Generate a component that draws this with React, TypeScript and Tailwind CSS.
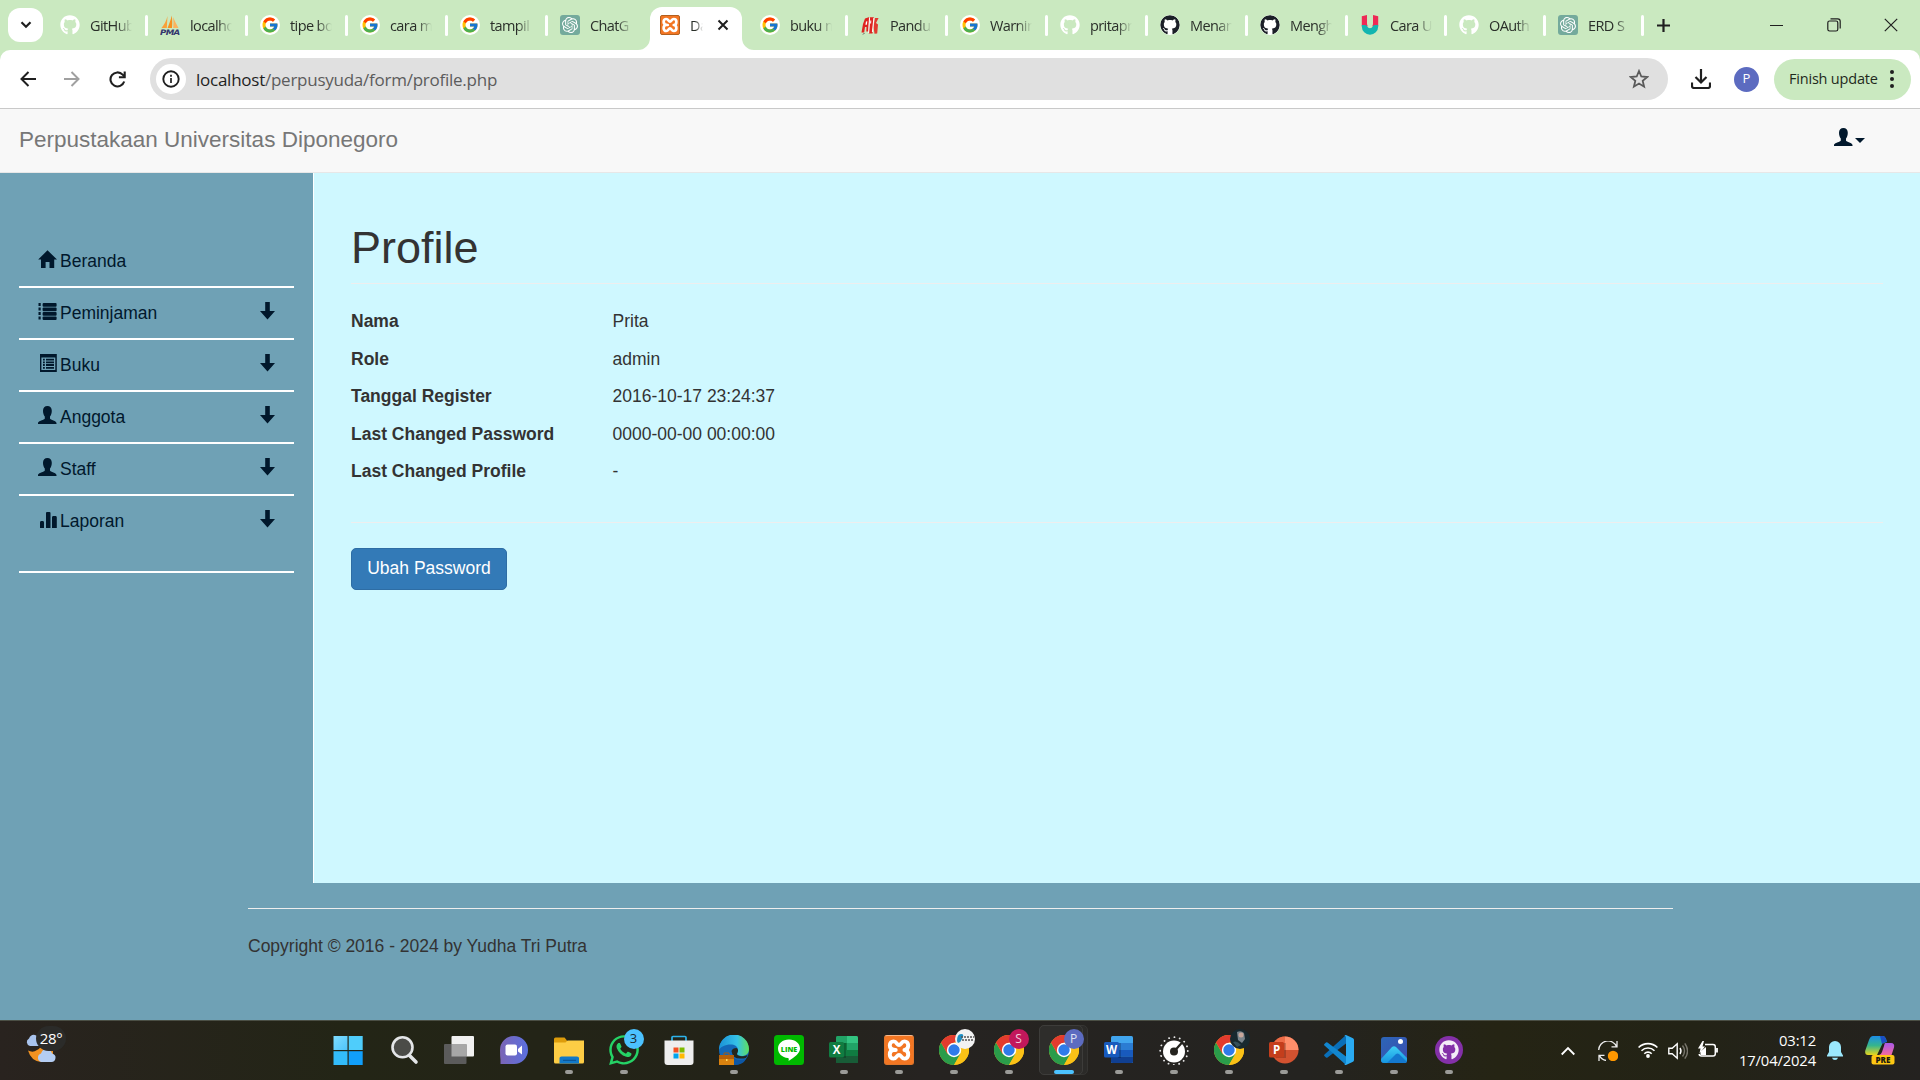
import type { ReactNode } from 'react';
import { FaGithub, FaWhatsapp } from 'react-icons/fa';
import { FcGoogle } from 'react-icons/fc';
import { SiOpenai } from 'react-icons/si';

/* ---------- favicons ---------- */
const GitFav = ({ dark = false }: { dark?: boolean }) => (
  <FaGithub className={dark ? 'size-5 rounded-full bg-white text-[#1b1f27]' : 'size-5 text-white'} />
);
const GoogleFav = () => (
  <span className="flex size-5 items-center justify-center rounded-full bg-white">
    <FcGoogle className="size-[18px]" />
  </span>
);
const GptFav = () => (
  <span className="flex size-5 items-center justify-center rounded-[3px] bg-[#74aa9c] text-white">
    <SiOpenai className="size-4" />
  </span>
);
const XamppFav = ({ big = false }: { big?: boolean }) => (
  <span
    className={
      big
        ? 'flex size-[30px] items-center justify-center rounded-[3px] border border-[#e0762b] border-t-[#f6b98c] bg-[#f37623] text-white'
        : 'flex size-5 items-center justify-center rounded-[2px] border border-[#b2601f] bg-[#f37623] text-white'
    }
  >
    <svg viewBox="0 0 24 24" className={big ? 'size-[26px]' : 'size-[18px]'} fill="none" stroke="currentColor" strokeWidth="3.6" strokeLinejoin="round" strokeLinecap="round">
      <path d="M9 12C4 12 3.500 9.500 3.500 7.700 3.500 5.500 5 4 7 4c3 0 3 3.500 5 3.500S14 4 17 4c2 0 3.500 1.500 3.500 3.700 0 1.800-.5 4.300-3.500 4.300 3 0 3.500 2.500 3.500 4.300 0 2.200-1.500 3.700-3.500 3.700-3 0-3-3.500-5-3.500S10 20 7 20c-2 0-3.500-1.500-3.500-3.700C3.500 14.500 4 12 7 12" />
    </svg>
  </span>
);
const PmaFav = () => (
  <svg viewBox="0 0 20 20" className="size-5">
    <path d="M7.500 1 6.800 13H1.500C4 10 6.400 6 7.500 1Z" fill="#f9a13a" />
    <path d="M11.800 0.5c-.9 4-2.5 8-4.2 12.5H12c.4-4 .4-8-.2-12.5Z" fill="#f7901e" />
    <path d="M13 2c1.500 3.800 3.500 7.500 5.500 11H13.200c.4-4 .3-7.500-.2-11Z" fill="#fbb35d" />
    <text x="0" y="19.500" fontSize="7.600" fontWeight="900" fontStyle="italic" fill="#33356d" fontFamily="DejaVu Sans" textLength="19.500" lengthAdjust="spacingAndGlyphs">PMA</text>
  </svg>
);
const PandFav = () => (
  <svg viewBox="0 0 20 20" className="size-5">
    <path d="M5 3.500 9.500 2 8.800 9 8.500 16.500H6.300L6.500 12H5l-.8 5.500H1.500L3 9Z" fill="#df2420" />
    <path d="M10 2.200h3.800L12.500 18.500H8.800L9.700 9Z" fill="#df2420" />
    <path d="M14.800 3h3.800l-2.600 5 2 1.500-.8 9-2.700.2-1-6.500Z" fill="#e23a30" />
    <path d="M9.500 2.500 8.700 18M13.900 3l-1.500 14" stroke="#fff" strokeWidth="1" />
    <path d="M6 6.500l1.300-.3-.4 3.600H5.400ZM10.300 5.500h1l-.2 3h-1Z" fill="#fff" />
    <path d="M3 19.500l1.500-1.500" stroke="#555" strokeWidth="1" />
  </svg>
);
const UFav = () => (
  <svg viewBox="0 0 20 20" className="size-5">
    <path d="M1.800 1.200 7 0v8.500q0 2 1 2.800H1.800ZM18.200 1.200 13 0v8.500q0 2-1 2.800h6.200Z" fill="#ee2a55" />
    <path d="M1.800 10h3.500q1.500 0 2 1.500Q8 13.300 10 13.300t2.700-1.800q.5-1.500 2-1.500h3.500v1.500a8.200 8.200 0 0 1-16.400 0Z" fill="#12b5b0" />
  </svg>
);

type Tab = { icon: ReactNode; title: string; w: string; active?: boolean; noSep?: boolean };
const tabs: Tab[] = [
  { icon: <GitFav />, title: 'GitHub', w: 'w-[100px]' },
  { icon: <PmaFav />, title: 'localho', w: 'w-[100px]' },
  { icon: <GoogleFav />, title: 'tipe bo', w: 'w-[100px]' },
  { icon: <GoogleFav />, title: 'cara m', w: 'w-[100px]' },
  { icon: <GoogleFav />, title: 'tampil', w: 'w-[100px]' },
  { icon: <GptFav />, title: 'ChatG', w: 'w-[100px]', noSep: true },
  { icon: <XamppFav />, title: 'Da', w: 'w-[100px]', active: true },
  { icon: <GoogleFav />, title: 'buku m', w: 'w-[100px]' },
  { icon: <PandFav />, title: 'Pandu', w: 'w-[100px]' },
  { icon: <GoogleFav />, title: 'Warnin', w: 'w-[100px]' },
  { icon: <GitFav />, title: 'pritapr', w: 'w-[100px]' },
  { icon: <GitFav dark />, title: 'Menan', w: 'w-[100px]' },
  { icon: <GitFav dark />, title: 'Mengh', w: 'w-[100px]' },
  { icon: <UFav />, title: 'Cara U', w: 'w-[99px]' },
  { icon: <GitFav />, title: 'OAuth', w: 'w-[99px]' },
  { icon: <GptFav />, title: 'ERD S', w: 'w-[98px]' },
];

function TabItem({ t }: { t: Tab }) {
  if (t.active) {
    return (
      <div className="relative flex h-[50px] w-[100px] shrink-0 items-end">
        <div className="flex h-[43px] w-[92px] items-center rounded-t-[12px] bg-white pb-[7px] pl-[10px]">
          {t.icon}
          <span className="ml-[10px] w-[13px] overflow-hidden whitespace-nowrap pt-[2px] [mask-image:linear-gradient(to_right,black_40%,transparent)]">{t.title}</span>
          <svg viewBox="0 0 12 12" className="ml-[14px] size-3" stroke="#1f1f1f" strokeWidth="2"><path d="M1.500 1.500l9 9M10.500 1.500l-9 9" /></svg>
        </div>
        <svg viewBox="0 0 12 12" className="absolute bottom-0 -left-3 size-3"><path d="M12 0v12H0A12 12 0 0 0 12 0" fill="#fff" /></svg>
        <svg viewBox="0 0 12 12" className="absolute bottom-0 left-[92px] size-3"><path d="M0 0v12h12A12 12 0 0 1 0 0" fill="#fff" /></svg>
      </div>
    );
  }
  return (
    <div className={`${t.w} flex h-[50px] shrink-0 items-center pl-[10px]`}>
      {t.icon}
      <span className="ml-[10px] w-[42px] overflow-hidden whitespace-nowrap pt-[2px] [mask-image:linear-gradient(to_right,black_65%,transparent)]">{t.title}</span>
      {!t.noSep && <i className="ml-auto mr-[2px] h-[21px] w-[3px] rounded-full bg-white" />}
    </div>
  );
}

/* ---------- page glyphs ---------- */
const G = ({ children }: { children: ReactNode }) => (
  <svg viewBox="0 0 19 19" className="size-[19px] shrink-0" fill="#01182c">{children}</svg>
);
const UserGlyph = () => (
  <G><path d="M9.400 0C6.700 0 5 1.900 5 4.700c0 2.500.7 4.600 1.800 5.700v1.800c0 .7-.4 1-1.200 1.400C3.300 14.700 0 15.400 0 17.300V18h18.500v-.7c0-1.900-3-2.600-5.300-3.700-.8-.4-1.200-.7-1.200-1.400v-1.800c1.100-1.100 1.800-3.200 1.800-5.700C13.800 1.900 12.100 0 9.400 0Z" /></G>
);
const HomeGlyph = () => (
  <G><path d="M9.500.2 19 9.600h-2.800V18h-4.700v-6H7.600v6H3V9.600H.2Z" /></G>
);
const ListGlyph = () => (
  <G>
    <path d="M.5 1h2.200v3H.5zM.5 5.500h2.200v3H.5zM.5 10h2.200v3H.5zM.5 14.500h2.200v3H.5z" />
    <rect x="4.600" y="1" width="14" height="3.700" rx="1" /><rect x="4.600" y="5.500" width="14" height="3.700" rx="1" />
    <rect x="4.600" y="10" width="14" height="3.700" rx="1" /><rect x="4.600" y="14.500" width="14" height="3.500" rx="1" />
  </G>
);
const ListAltGlyph = () => (
  <G>
    <path fillRule="evenodd" d="M2 0h16.800v18H2ZM3.400 3.400v12.700h13.900V3.400Z" />
    <path d="M5 4.700h1.800v1.800H5zM8 4.700h8v1.800H8zM5 7.400h1.800v1.800H5zM8 7.400h8v1.800H8zM5 10.100h1.800v1.800H5zM8 10.100h8v1.800H8zM5 12.900h1.800v1.800H5zM8 12.900h8v1.800H8z" />
  </G>
);
const StatsGlyph = () => (
  <G><path d="M2 18v-5.500Q2 11 3 11h2q1 0 1 1.500V18ZM8 18V3q0-1 1-1h2.500q1 0 1 1v15ZM14 18V7.500q0-1.500 1-1.500h2.800q1 0 1 1.500V18Z" /></G>
);
const DownGlyph = () => (
  <svg viewBox="0 0 15 18" className="h-[18px] w-[15px]" fill="#01182c"><path d="M5.200 0h4.600v9H15L7.500 17.500 0 9h5.200Z" /></svg>
);

const menu = [
  { label: 'Beranda', icon: <HomeGlyph />, down: false },
  { label: 'Peminjaman', icon: <ListGlyph />, down: true },
  { label: 'Buku', icon: <ListAltGlyph />, down: true },
  { label: 'Anggota', icon: <UserGlyph />, down: true },
  { label: 'Staff', icon: <UserGlyph />, down: true },
  { label: 'Laporan', icon: <StatsGlyph />, down: true },
];
const details = [
  ['Nama', 'Prita'],
  ['Role', 'admin'],
  ['Tanggal Register', '2016-10-17 23:24:37'],
  ['Last Changed Password', '0000-00-00 00:00:00'],
  ['Last Changed Profile', '-'],
];

/* ---------- taskbar icons ---------- */
const Chrome = () => (
  <svg viewBox="0 0 30 30" className="size-[30px]">
    <circle cx="15" cy="15" r="15" fill="#fbc116" />
    <path d="M15 15 2 7.500A15 15 0 0 1 28 7.500H15Z" fill="#e33b2e" />
    <path d="M2 7.500A15 15 0 0 0 15 30l6.500-11.200L15 15l-6.500 3.700Z" fill="#2a9c4a" />
    <path d="M15 7.500h13A15 15 0 0 1 15 30l6.500-11.200Z" fill="#fbc116" />
    <path d="M2 7.500 8.500 18.700 15 7.500Z" fill="#e33b2e" />
    <circle cx="15" cy="15" r="7.200" fill="#fff" />
    <circle cx="15" cy="15" r="5.700" fill="#2f7be9" />
  </svg>
);
const Office = ({ letter, tile, rows }: { letter: string; tile: string; rows: string[] }) => (
  <svg viewBox="0 0 30 30" className="size-[30px]">
    {letter === 'P' ? (
      <>
        <circle cx="16" cy="15" r="13.500" fill={rows[2]} />
        <path d="M16 1.500A13.500 13.500 0 0 0 2.500 15H16Z" fill={rows[0]} />
        <path d="M16 1.500A13.500 13.500 0 0 1 29.500 15H16Z" fill={rows[1]} />
      </>
    ) : letter === 'X' ? (
      <>
        <rect x="7" y="1" width="22" height="27" rx="1.500" fill={rows[2]} />
        <path d="M7 2.500Q7 1 8.500 1H18v7H7Z" fill={rows[1]} />
        <path d="M18 1h9.500Q29 1 29 2.500V8H18Z" fill={rows[0]} />
        <path d="M18 8h11v7H18Z" fill={rows[1]} />
        <path d="M7 21h22v5.500q0 1.500-1.500 1.500h-19Q7 28 7 26.500Z" fill={rows[3]} />
      </>
    ) : (
      <>
        <rect x="7" y="1" width="22" height="27" rx="1.500" fill={rows[0]} />
        <path d="M7 8h22v7H7Z" fill={rows[1]} />
        <path d="M7 15h22v6.500H7Z" fill={rows[2]} />
        <path d="M7 21.500h22v5q0 1.500-1.500 1.500h-19Q7 28 7 26.500Z" fill={rows[3]} />
      </>
    )}
    <rect x="7" y="8" width="10" height="15" fill="#000" opacity=".2" />
    <rect x="0" y="7" width="15" height="15.500" rx="1.500" fill={tile} />
    <text x="7.500" y="19" textAnchor="middle" fontFamily="Open Sans" fontWeight="700" fontSize="11.500" fill="#fff">{letter}</text>
  </svg>
);
const Badge = ({ c, children }: { c: string; children?: ReactNode }) => (
  <span className={`absolute -top-[6px] left-[15px] flex size-5 items-center justify-center rounded-full text-[12px] ${c}`}>{children}</span>
);

const apps: { icon: ReactNode; run?: 'on' | 'active' }[] = [
  {
    icon: (
      <svg viewBox="0 0 30 30" className="mr-[2px] size-[30px] shrink-0">
        <defs><linearGradient id="win" x1="0" y1="0" x2="1" y2="1"><stop stopColor="#7edcff" /><stop offset="1" stopColor="#4fc4fa" /></linearGradient></defs>
        <path d="M.5 1h14v14H.5z" fill="url(#win)" /><path d="M15.700 1h14v14h-14z" fill="#4fcdfb" />
        <path d="M.5 16.200h14v13.800H.5z" fill="#33bcfb" /><path d="M15.700 16.200h14v13.800h-14z" fill="#119ffb" />
      </svg>
    ),
  },
  {
    icon: (
      <svg viewBox="0 0 30 30" className="size-[30px]" fill="none" stroke="#e4e6e8" strokeLinecap="round">
        <circle cx="13.500" cy="12.300" r="10" fill="#4b4c48" strokeWidth="2.600" /><path d="M20.500 20.500 27 27" strokeWidth="3.600" />
      </svg>
    ),
  },
  {
    icon: (
      <svg viewBox="0 0 30 30" className="size-[30px]">
        <rect x="7.500" y="1" width="22.500" height="20.500" rx="1" fill="#f1f1f1" /><rect x="0" y="9" width="22.500" height="20" rx="1" fill="#5b5b5b" />
        <rect x="7.500" y="9" width="15" height="12.500" fill="#a7a7a7" />
      </svg>
    ),
  },
  {
    icon: (
      <svg viewBox="0 0 30 30" className="size-[30px]">
        <defs><linearGradient id="chat" x1="0" x2="1"><stop stopColor="#7b65b5" /><stop offset="1" stopColor="#5b70e0" /></linearGradient></defs>
        <path d="M15 1a14 14 0 1 1 0 28H1.500V25Q1 21 1 15A14 14 0 0 1 15 1Z" fill="url(#chat)" />
        <rect x="6.500" y="9.500" width="11.500" height="11" rx="2" fill="#fff" /><path d="m19 14 4-3.500v9L19 16.500Z" fill="#fff" />
      </svg>
    ),
  },
  {
    run: 'on',
    icon: (
      <svg viewBox="0 0 30 30" className="size-[30px]">
        <path d="M0 4q0-1.500 1.500-1.500h9L13 5.500v3H0Z" fill="#dd9c0b" />
        <path d="M0 7.500h11.500l2-2H30v21.500q0 1.500-1.500 1.500h-27Q0 28.500 0 27Z" fill="#fdcd45" />
        <path d="M5.500 28.500V23q0-1.500 2-1.500h15.500q2 0 2 1.500v5.500Z" fill="#1279c8" /><path d="M9 25.300h13" stroke="#0a4f8f" />
      </svg>
    ),
  },
  { run: 'on', icon: <><FaWhatsapp className="size-[34px] shrink-0 text-[#25d366]" /><Badge c="bg-[#4cc2ff] text-[#1b2b35] text-[13px]">3</Badge></> },
  {
    icon: (
      <svg viewBox="0 0 30 30" className="size-[30px]">
        <path d="M8 7V2.500Q8 1.500 9 1.500h12q1 0 1 1V7" fill="none" stroke="#2db3ea" strokeWidth="1.700" />
        <path d="M.5 5.500h29V27q0 3-3 3h-23q-3 0-3-3Z" fill="#eeeeee" />
        <path d="M9.500 12.500h5v5h-5z" fill="#f25022" /><path d="M15.500 12.500h5v5h-5z" fill="#7fba00" /><path d="M9.500 18.500h5v5h-5z" fill="#00a4ef" /><path d="M15.500 18.500h5v5h-5z" fill="#ffb900" />
      </svg>
    ),
  },
  {
    run: 'on',
    icon: (
      <svg viewBox="0 0 30 30" className="size-[30px]">
        <defs><linearGradient id="edge" x1="0" x2="1"><stop stopColor="#1b92d6" /><stop offset=".6" stopColor="#35c1e8" /><stop offset="1" stopColor="#5fe05c" /></linearGradient></defs>
        <circle cx="15" cy="15" r="15" fill="#1368b8" />
        <path d="M0 15A15 15 0 0 1 30 14c0 5-4 7-7 7-4 0-6-1.500-4.500-3.500C20 14 18 10 13 9.500 7 9 1 12 0 15Z" fill="url(#edge)" />
        <path d="M12.500 16q1-3 5-3 2.500 1.500 1 4.500-1.500 3 2.500 3.500 4 .8 7.500-1-1 4-5 3.500-10 1-11-7.500Z" fill="#24261d" />
        <path d="M13 21q4 6 14 3-3 6-12 6Z" fill="#0d57a5" />
        <rect x="0" y="20" width="15" height="10" fill="#d9820f" /><path d="M0 20h15v4H0Z" fill="#b5600a" /><path d="M5 20v-2h5v2" stroke="#a85a10" fill="none" /><path d="M7 24h1.500v2H7z" fill="#ffd75e" />
      </svg>
    ),
  },
  {
    icon: (
      <svg viewBox="0 0 30 30" className="size-[30px]">
        <rect width="30" height="30" rx="3.500" fill="#00b900" />
        <path d="M15 4.500c6.500 0 11 4 11 9 0 4-3.500 7-7 9.500L14.500 26c.5-1.500.3-3-.5-3C8 22.500 4 18.500 4 13.500c0-5 4.500-9 11-9Z" fill="#fff" />
        <text x="15" y="16.500" textAnchor="middle" fontFamily="Open Sans" fontWeight="800" fontSize="6.800" fill="#00b900" textLength="16.500" lengthAdjust="spacingAndGlyphs">LINE</text>
      </svg>
    ),
  },
  { run: 'on', icon: <Office letter="X" tile="#107c41" rows={['#33c481', '#21a366', '#107c41', '#185c37']} /> },
  { run: 'on', icon: <XamppFav big /> },
  {
    run: 'on',
    icon: (
      <>
        <Chrome />
        <svg viewBox="0 0 20 20" className="absolute -top-[6px] left-[16px] size-5">
          <circle cx="10" cy="10" r="10" fill="#f2f2f2" /><path d="M2 12Q2 5 6 5t1 5q-1 3-4 4" fill="#1e8fc4" /><path d="M6 8h13M7 11h12" stroke="#555" strokeWidth="1.300" strokeDasharray="2 1" />
        </svg>
      </>
    ),
  },
  { run: 'on', icon: <><Chrome /><Badge c="bg-[#c2185b] text-[#f3cfdc]">S</Badge></> },
  { run: 'active', icon: <><Chrome /><Badge c="bg-[#5c6bc0] text-[#dfe2f3]">P</Badge></> },
  { run: 'on', icon: <Office letter="W" tile="#185abd" rows={['#41a5ee', '#2b7cd3', '#185abd', '#103f91']} /> },
  {
    run: 'on',
    icon: (
      <svg viewBox="0 0 30 30" className="size-[30px]">
        <circle cx="15" cy="16" r="13.800" fill="none" stroke="#e8e8e8" strokeWidth="1.800" strokeLinecap="round" strokeDasharray=".1 5.320" />
        <circle cx="15" cy="16.500" r="11" fill="#fff" /><circle cx="15" cy="16.500" r="4" fill="#24231f" /><path d="m15 16.500 8.500-9.500" stroke="#24231f" strokeWidth="2.200" />
      </svg>
    ),
  },
  {
    run: 'on',
    icon: (
      <>
        <Chrome />
        <svg viewBox="0 0 20 20" className="absolute -top-[6px] left-[16px] size-5">
          <circle cx="10" cy="10" r="10" fill="#18292f" /><path d="M7 3q4-2 7 1l1 6-3 4-4-3Z" fill="#78858d" /><circle cx="11" cy="6" r="2.500" fill="#c7a79c" /><path d="M3 13q4-2 8 3l-4 2Z" fill="#34505a" />
        </svg>
      </>
    ),
  },
  { run: 'on', icon: <Office letter="P" tile="#c43e1c" rows={['#ed6c47', '#ff8f6b', '#d35230']} /> },
  {
    run: 'on',
    icon: (
      <svg viewBox="0 0 30 30" className="size-[30px]">
        <path d="M22 0v8.500L3.500 22.500Q2.800 23 2 22.400L.4 21Q-.3 20.200.5 19.500Z" fill="#0a6fb8" />
        <path d="M22 30v-8.500L3.500 7.500Q2.800 7 2 7.600L.4 9q-.7.800.1 1.500Z" fill="#1286cf" />
        <path d="M22 0 29 3.200Q30 3.700 30 5v20q0 1.300-1 1.800L22 30q-1 .2-1.800-.8Q22 29.500 22 27.500v-25Q22 .5 20.200.8 21 0 22 0Z" fill="#2aabf2" />
      </svg>
    ),
  },
  {
    run: 'on',
    icon: (
      <svg viewBox="0 0 30 30" className="size-[30px]">
        <defs><linearGradient id="pho" x1="0" y1="0" x2="1" y2="1"><stop stopColor="#2c66b8" /><stop offset="1" stopColor="#3b4db0" /></linearGradient><linearGradient id="mt" x1="0" y1="0" x2="0" y2="1"><stop stopColor="#3fd0f5" /><stop offset="1" stopColor="#1695e0" /></linearGradient></defs>
        <rect x="2" y="2" width="26" height="26" rx="3" fill="url(#pho)" /><path d="M2 24 13 12q2-1.500 4 0l11 11v2q0 3-3 3H5q-3 0-3-3Z" fill="url(#mt)" /><path d="M8 28l9-9q1.500-1.200 3 0l8 8q-1 1-3 1Z" fill="#1479cf" />
        <circle cx="21.500" cy="6.500" r="2.500" fill="#fff" />
      </svg>
    ),
  },
  {
    run: 'on',
    icon: (
      <span className="flex size-7 items-center justify-center rounded-full bg-[#8430a8]"><FaGithub className="size-5 text-[#f4ecf7]" /></span>
    ),
  },
];

export default function App() {
  return (
    <div className="flex h-[1080px] w-[1920px] flex-col overflow-hidden bg-[#cae9c0] font-['Liberation_Sans',Arial,sans-serif] text-[17.5px] text-[#333]">
      {/* tab strip */}
      <header className="flex h-[50px] shrink-0 items-center pl-2 font-['Open_Sans',sans-serif] text-[14.500px] tracking-[-0.6px] text-[#2a2f29]">
        <div className="mr-[7px] flex h-[34px] w-[35px] items-center justify-center rounded-[12px] bg-white">
          <svg viewBox="0 0 12 8" className="h-2 w-3" fill="none" stroke="#1f1f1f" strokeWidth="2.200"><path d="m1.500 1.200 4.500 4.500 4.500-4.500" /></svg>
        </div>
        {tabs.map((t, i) => <TabItem key={i} t={t} />)}
        <svg viewBox="0 0 13 13" className="ml-[11px] size-[13px]" stroke="#1f1f1f" strokeWidth="2.200"><path d="M6.500 0v13M0 6.500h13" /></svg>
        <div className="ml-auto mr-px flex h-[50px]">
          <span className="flex w-[57px] items-center justify-center"><i className="h-px w-[13px] bg-[#1f1f1f]" /></span>
          <span className="flex w-[57px] items-center justify-center">
            <svg viewBox="0 0 14 14" className="size-[14px]" fill="none" stroke="#1f1f1f" strokeWidth="1.200"><rect x=".8" y="3" width="10" height="10" rx="1.800" /><path d="M3.500.8H10.700q2.500 0 2.500 2.500v7.200" /></svg>
          </span>
          <span className="flex w-[57px] items-center justify-center">
            <svg viewBox="0 0 14 14" className="size-[14px]" stroke="#1f1f1f" strokeWidth="1.200"><path d="m.8.8 12.400 12.400M13.200.8.8 13.200" /></svg>
          </span>
        </div>
      </header>

      {/* toolbar */}
      <div className="flex h-[59px] shrink-0 items-center rounded-t-[10px] border-b border-[#c9c9c9] bg-white font-['Open_Sans',sans-serif]">
        <svg viewBox="0 0 16 16" className="ml-5 size-4" fill="none" stroke="#1f1f1f" strokeWidth="2"><path d="M16 8H1.500M8.500 1 1.500 8l7 7" /></svg>
        <svg viewBox="0 0 16 16" className="ml-[28px] size-4" fill="none" stroke="#a0a0a0" strokeWidth="2"><path d="M0 8h14.500M7.500 1l7 7-7 7" /></svg>
        <svg viewBox="0 0 17 17" className="ml-[29px] size-[17px]" fill="none" stroke="#1f1f1f" strokeWidth="2.100"><path d="M15.200 10.500A7 7 0 1 1 13.600 3.600L15.500 5.500" /><path d="M15.700.5v5.800H9.900" /></svg>
        <div className="ml-6 flex h-[42px] w-[1518px] items-center rounded-full bg-[#e0e0e0] pl-[6px]">
          <span className="flex size-[30px] items-center justify-center rounded-full bg-white">
            <svg viewBox="0 0 18 18" className="size-[18px]" fill="none" stroke="#1f1f1f" strokeWidth="1.900"><circle cx="9" cy="9" r="7.700" /><path d="M9 8v5M9 4.700v2" strokeWidth="1.700" /></svg>
          </span>
          <span className="ml-[10px] whitespace-nowrap pt-px text-[17px] tracking-[-0.25px] text-[#5c5c5c]"><span className="text-[#1f1f1f]">localhost</span>/perpusyuda/form/profile.php</span>
          <svg viewBox="0 0 20 20" className="ml-auto mr-[19px] size-5" fill="none" stroke="#5a5a5a" strokeWidth="1.800"><path d="m10 2 2.300 5.500 6 .5-4.600 3.900 1.400 5.800-5.100-3.100-5.100 3.100 1.400-5.800L1.700 8l6-.5Z" /></svg>
        </div>
        <svg viewBox="0 0 20 20" className="ml-[23px] size-5" fill="none" stroke="#1f1f1f" strokeWidth="2.200"><path d="M10 0v13M4.500 8l5.500 5.500L15.500 8M1 13.500V17q0 2 2 2h14q2 0 2-2v-3.500" /></svg>
        <span className="ml-[23px] flex size-[25px] items-center justify-center rounded-full bg-[#5c6bc0] text-[13px] text-white">P</span>
        <div className="ml-[15px] flex h-[41px] w-[137px] items-center rounded-full bg-[#cae9c0] pl-[15px] text-[14.500px] tracking-[-0.2px] text-[#1f2a1c]">
          <span className="w-[89px] whitespace-nowrap">Finish update</span>
          <svg viewBox="0 0 4 18" className="ml-3 h-[18px] w-1" fill="#1f1f1f"><circle cx="2" cy="2" r="2" /><circle cx="2" cy="9" r="2" /><circle cx="2" cy="16" r="2" /></svg>
        </div>
      </div>

      {/* site navbar */}
      <nav className="flex h-16 shrink-0 items-start border-b border-[#e7e7e7] bg-[#f8f8f8] pl-[19px] pr-[55px] pt-[19px]">
        <span className="-mt-px whitespace-nowrap text-[22.500px] leading-[25px] text-[#777]">Perpustakaan Universitas Diponegoro</span>
        <span className="ml-auto flex items-start gap-[2px]">
          <UserGlyph />
          <svg viewBox="0 0 10 5" className="mt-[10px] h-[5px] w-[10px]" fill="#01182c"><path d="M0 0h10L5 5Z" /></svg>
        </span>
      </nav>

      {/* body */}
      <div className="flex h-[710px] shrink-0 bg-[#6fa1b5]">
        <aside className="w-[313px] shrink-0 pl-[19px] pr-[19px] pt-[63px] text-[#01182c]">
          <ul className="h-[337px] border-b-2 border-white">
            {menu.map((m) => (
              <li key={m.label} className="flex h-[52px] items-start border-b-2 border-white pl-[18.500px] pr-[19px] pt-[14px] last:border-b-0">
                <span className="flex w-[22.500px]">{m.icon}</span>
                <span className="flex-1 pt-[1px] leading-[20px]">{m.label}</span>
                {m.down && <DownGlyph />}
              </li>
            ))}
          </ul>
        </aside>
        <main className="flex-1 border-l border-white bg-[#cff8ff] pl-[37px] pr-[37px] pt-[50px]">
          <h1 className="h-[61px] border-b border-[#eee] text-[45px] leading-[50px]">Profile</h1>
          <dl className="pt-[23px]">
            {details.map(([k, v]) => (
              <div key={k} className="flex h-[37.5px] leading-[25px]">
                <dt className="w-[261.500px] pt-[2px] font-bold">{k}</dt>
                <dd className="pt-[2px]">{v}</dd>
              </div>
            ))}
          </dl>
          <hr className="mt-[27px] border-[#eee]" />
          <button className="mt-[25px] flex h-[42px] w-[156px] items-center justify-center rounded-[5px] border border-[#2e6da4] bg-[#337ab7] text-white">Ubah Password</button>
        </main>
      </div>
      <footer className="h-[137px] shrink-0 bg-[#6fa1b5] pl-[248px] pr-[247px] pt-[25px]">
        <p className="border-t border-[#eee] pt-[25px] leading-[25px] tracking-[-0.01px]">Copyright © 2016 - 2024 by Yudha Tri Putra</p>
      </footer>

      {/* taskbar */}
      <div className="flex h-[60px] shrink-0 border-t border-[#4b4f45] bg-[linear-gradient(90deg,#29231f_0%,#232516_18%,#232318_38%,#262321_48%,#242320_68%,#252414_78%,#232316_88%,#242220_100%)] font-['Open_Sans',sans-serif] text-white">
        <div className="flex w-[321px] pl-[26px] pt-[8px]">
          <svg viewBox="0 0 32 34" className="h-[34px] w-8">
            <path d="M4 17a4 4 0 0 1-1-7.500Q5 5 9 6q5 1 5 11Z" fill="#a9c4ee" />
            <path d="M2 21.500q5 2.500 9-.5 4-2 5-6h11v10q-4 7-12 8Q5 32 2 21.500Z" fill="#f29220" />
            <path d="M15 33a4.500 4.500 0 0 1 0-8.500q2-5 6-5 4 1 5 5 4 1 3.500 4.500Q29 33 25.500 33Z" fill="#b4cdf2" />
          </svg>
          <span className="-ml-[22px] -mt-[3px] flex h-[25px] w-[30px] items-center justify-center rounded-full bg-[#2b2b29] text-[15px] tracking-[-0.4px]">28°</span>
        </div>
        {apps.map((a, i) => (
          <div key={i} className="relative flex w-[55px] shrink-0 flex-col items-center pt-[14px]">
            {a.run === 'active' && (
              <>
                <i className="absolute left-[3px] top-[4px] h-[50px] w-[49px] rounded-[5px] border border-[#353432] bg-[#2b2a28]" />
                <i className="absolute left-[3px] top-[4px] h-[50px] w-[44px] rounded-[5px] border border-[#3d3c3a] bg-[#2e2d2b]" />
              </>
            )}
            <div className="relative flex h-[30px] w-[30px] items-center justify-center">{a.icon}</div>
            {a.run === 'on' && <i className="mt-[5px] h-[4px] w-2 rounded-full bg-[#9b9b98]" />}
            {a.run === 'active' && <i className="relative mt-[5px] h-[4px] w-5 rounded-full bg-[#4cc2ff]" />}
          </div>
        ))}
        <div className="ml-auto flex h-[59px] items-center pr-[25px]">
          <svg viewBox="0 0 14 9" className="size-[14px]" fill="none" stroke="#fff" strokeWidth="1.800"><path d="m.7 8 6.300-6.500L13.300 8" /></svg>
          <svg viewBox="0 0 20 20" className="ml-[23px] size-5" fill="none" stroke="#eee" strokeWidth="1.300"><path d="M.7 9A9.300 9.300 0 0 1 18.500 5.500M19 0v5.800h-5.500M8 19.500A9 9 0 0 1 1.500 14.500M1 20v-5.700h5.500" /><circle cx="15" cy="15" r="5.200" fill="#ff9800" stroke="none" /></svg>
          <svg viewBox="0 0 20 16" className="ml-5 -mt-[2px] h-4 w-5" fill="none" stroke="#fff" strokeWidth="1.600"><path d="M.6 5.500a13.300 13.300 0 0 1 18.800 0M3.500 8.700a9.200 9.200 0 0 1 13 0M6.300 11.700a5.200 5.200 0 0 1 7.400 0" /><circle cx="10" cy="14" r="1.900" fill="#fff" stroke="none" /></svg>
          <svg viewBox="0 0 20 18" className="ml-[10px] h-[18px] w-5" fill="none" stroke="#fff" strokeWidth="1.400"><path d="M.8 6.200v5.600h3.400l5 4.400V1.800l-5 4.400Z" /><path d="M12 6q2 3 0 6" /><path d="M14.500 3.500q4 5.500 0 11M16.800 1.300q5.500 7.700 0 15.400" stroke="#77756b" /></svg>
          <svg viewBox="0 0 20 16" className="ml-[10px] -mt-px h-4 w-5 overflow-visible" fill="none" stroke="#fff" strokeWidth="1.500"><path d="M7 2.500h8q2.300 0 2.300 2.300v6.900q0 2.300-2.300 2.300H3.500Q1.200 14 1.200 12" /><path d="M4.500-1 0 6.500h2.500L1.500 11.500 7 4.500H4.500L6-1Z" fill="#fff" stroke="none" /><path d="M2.500 13V9.500L8 5v8Z" fill="#fff" stroke="none" /><path d="M19 6v4.500" strokeWidth="1.800" /></svg>
          <div className="-mt-[2px] ml-[17px] w-[81px] whitespace-nowrap text-right text-[14.800px] leading-[20px] tracking-[-0.15px]"><div>03:12</div><div>17/04/2024</div></div>
          <svg viewBox="0 0 16 19" className="ml-[11px] h-[19px] w-4" fill="#9be8fd"><path d="M8 0a6 6 0 0 1 6 6v5l2 3.500V15.500H0V14.500L2 11V6A6 6 0 0 1 8 0ZM5 16.700h6q-.6 2.300-3 2.300t-3-2.300Z" /></svg>
          <svg viewBox="0 0 30 29" className="ml-[22px] h-[29px] w-[30px]">
            <defs><linearGradient id="cp1" x1="0" y1="0" x2="0" y2="1"><stop stopColor="#1c8ee8" /><stop offset=".5" stopColor="#35b58d" /><stop offset="1" stopColor="#e8d51c" /></linearGradient><linearGradient id="cp2" x1="0" y1="0" x2="0" y2="1"><stop stopColor="#a958e8" /><stop offset="1" stopColor="#f26aa0" /></linearGradient></defs>
            <path d="M8 0h10q2 0 3 3l1 3q-3 0-4.500 3L13 19H3Q-.5 19 .3 14.500L4 4Q5.500 0 8 0Z" fill="url(#cp1)" /><path d="M15 0h3q2 0 3 3l1 3q-3 0-5 2Z" fill="#1a4fc4" />
            <path d="M17.500 7.500h1.500l-4 11.500h-3Z" fill="#24241c" />
            <path d="M20 7h6q4 0 3 4.500L26.500 19H14q2 0 3-3l2-6q.6-3 1-3Z" fill="url(#cp2)" />
            <rect x="6.500" y="19" width="23" height="9.500" rx="2" fill="#fdc613" />
            <text x="18" y="26.700" textAnchor="middle" fontFamily="Open Sans" fontWeight="800" fontSize="8" fill="#1a1a10">PRE</text>
          </svg>
        </div>
      </div>
    </div>
  );
}
